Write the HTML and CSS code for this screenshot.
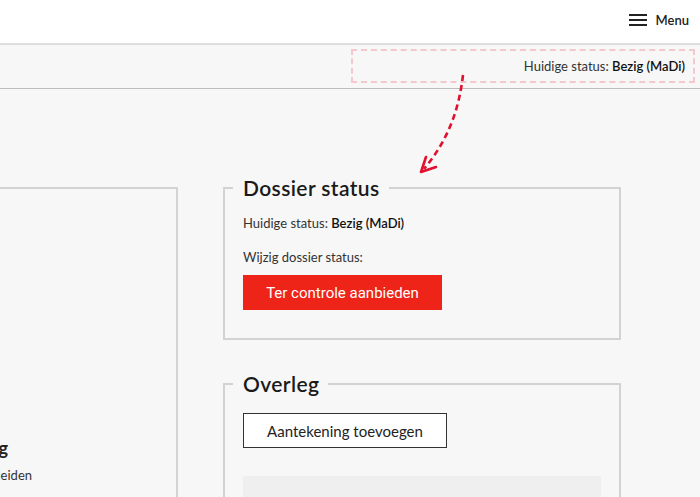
FILE: index.html
```html
<!DOCTYPE html>
<html lang="nl">
<head>
<meta charset="utf-8">
<title>Dossier status</title>
<link rel="stylesheet" href="styles.css">
</head>
<body>
<header class="topbar">
  <button class="menu-btn" type="button">
    <svg class="menu-icon" width="18" height="12" viewBox="0 0 18 12" aria-hidden="true">
      <rect x="0" y="0" width="18" height="2" fill="#222"/>
      <rect x="0" y="5" width="18" height="2" fill="#222"/>
      <rect x="0" y="10" width="18" height="2" fill="#222"/>
    </svg>
    <span>Menu</span>
  </button>
</header>
<div class="subbar">
  <div class="current-status">Huidige status: <strong>Bezig (MaDi)</strong></div>
  <div class="highlight"></div>
</div>
<svg class="arrow" width="700" height="200" viewBox="0 0 700 200" aria-hidden="true">
  <path d="M463 75 C 459 110, 448 140, 424 169" fill="none" stroke="#e0102e" stroke-width="2.6" stroke-dasharray="6 4"/>
  <path d="M426 157 L 421 172 L 436 167" fill="none" stroke="#e0102e" stroke-width="2.6" stroke-linecap="round" stroke-linejoin="round"/>
</svg>
<main class="content">
  <fieldset class="panel panel-left">
    <legend>Dossier</legend>
    <h3 class="left-heading">Dossier begeleiding</h3>
    <p class="left-text">Collega's die dit dossier begeleiden</p>
  </fieldset>
  <div class="column">
    <fieldset class="panel panel-status">
      <legend>Dossier status</legend>
      <p class="line first">Huidige status: <strong>Bezig (MaDi)</strong></p>
      <p class="line">Wijzig dossier status:</p>
      <button class="btn-primary" type="button">Ter controle aanbieden</button>
    </fieldset>
    <fieldset class="panel panel-overleg">
      <legend>Overleg</legend>
      <button class="btn-secondary" type="button">Aantekening toevoegen</button>
      <div class="note-area"></div>
    </fieldset>
  </div>
</main>
</body>
</html>
```
FILE: styles.css
```css
html, body {
  margin: 0;
  padding: 0;
}
body {
  background: #f7f7f7;
  font-family: Lato, "Open Sans", sans-serif;
  color: #222;
  overflow: hidden;
  height: 497px;
  position: relative;
}
.topbar {
  height: 43px;
  background: #fff;
  border-bottom: 2px solid #dedede;
  display: flex;
  justify-content: flex-end;
  align-items: center;
  padding-right: 11px;
}
.menu-btn {
  display: flex;
  align-items: center;
  gap: 9px;
  border: 0;
  background: none;
  padding: 0;
  font-family: Lato, sans-serif;
  font-size: 13px;
  font-weight: 600;
  color: #222;
  margin-top: -3px;
}
.subbar {
  height: 43px;
  background: #f7f7f7;
  border-bottom: 1px solid #bdbdbd;
  display: flex;
  justify-content: flex-end;
  align-items: center;
  padding-right: 15px;
  position: relative;
}
.current-status {
  font-size: 13px;
  color: #333;
  margin-top: -2px;
}
.current-status strong {
  color: #111;
  font-weight: 600;
}
.highlight {
  position: absolute;
  left: 351px;
  top: 4px;
  width: 340px;
  height: 30px;
  border: 2px dashed #f3c9cd;
}
.arrow {
  position: absolute;
  left: 0;
  top: 0;
  pointer-events: none;
}
.content {
  display: flex;
  gap: 45px;
  padding-top: 87px;
}
.column {
  display: flex;
  flex-direction: column;
  gap: 32px;
  width: 398px;
}
.panel {
  margin: 0;
  border: 2px solid #d3d3d3;
  padding: 0 18px 26px 8px;
  min-width: 0;
}
.panel-status {
  padding-bottom: 28px;
}
.panel legend {
  font-size: 21px;
  line-height: 24px;
  font-weight: 600;
  letter-spacing: 0.4px;
  color: #1a1a1a;
  padding: 0 9px 0 10px;
}
.panel-left {
  width: 600px;
  margin-left: -422px;
  height: 500px;
  box-sizing: border-box;
  flex-shrink: 0;
  padding-left: 18px;
}
.left-heading {
  margin: 236px 0 0;
  font-size: 18px;
  line-height: 24px;
  font-weight: 700;
  text-align: right;
  padding-right: 150px;
  white-space: nowrap;
}
.left-text {
  margin: 6px 0 0;
  font-size: 13px;
  line-height: 18px;
  color: #333;
  text-align: right;
  padding-right: 126px;
  white-space: nowrap;
}
.line {
  margin: 16px 0 0 10px;
  font-size: 13px;
  line-height: 18px;
  color: #333;
}
.line.first {
  margin-top: 14px;
}
.line strong {
  color: #111;
  font-weight: 600;
}
.btn-primary {
  margin: 9px 0 0 10px;
  width: 199px;
  height: 35px;
  border: 0;
  background: #ee2419;
  color: #fff;
  font-family: Roboto, "Open Sans", sans-serif;
  font-size: 15px;
  display: block;
}
.panel-overleg {
  padding-bottom: 0;
  height: 140px;
}
.btn-secondary {
  margin: 17px 0 0 10px;
  width: 204px;
  height: 35px;
  border: 1px solid #333;
  background: #fff;
  color: #222;
  font-family: Lato, sans-serif;
  font-size: 15px;
  display: block;
}
.note-area {
  margin: 28px 0 0 10px;
  height: 60px;
  background: #efefef;
}
```
